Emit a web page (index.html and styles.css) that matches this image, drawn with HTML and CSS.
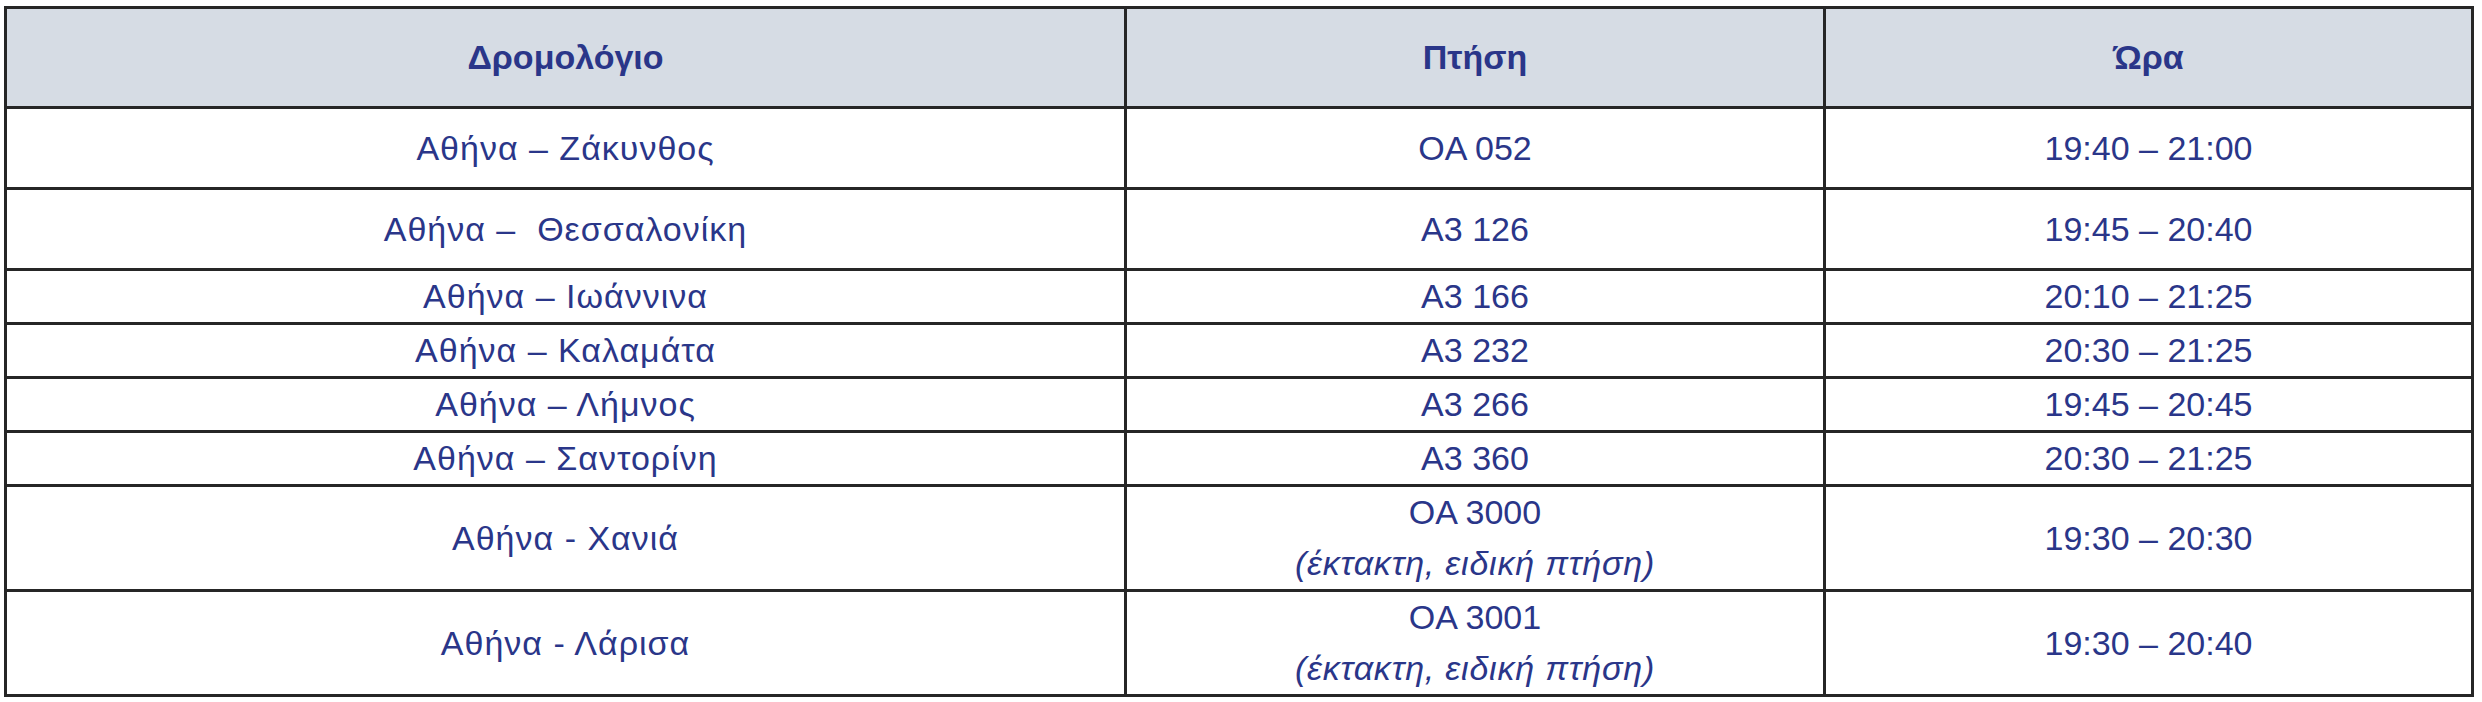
FILE: index.html
```html
<!DOCTYPE html>
<html lang="el">
<head>
<meta charset="utf-8">
<title>Πτήσεις</title>
<link rel="stylesheet" href="styles.css">
</head>
<body>
<table class="flights">
  <colgroup>
    <col class="c-route">
    <col class="c-flight">
    <col class="c-time">
  </colgroup>
  <thead>
    <tr class="r-head">
      <th>Δρομολόγιο</th>
      <th>Πτήση</th>
      <th>Ώρα</th>
    </tr>
  </thead>
  <tbody>
    <tr class="r-tall">
      <td class="route">Αθήνα – Ζάκυνθος</td>
      <td>OA 052</td>
      <td>19:40 – 21:00</td>
    </tr>
    <tr class="r-tall">
      <td class="route">Αθήνα –&nbsp; Θεσσαλονίκη</td>
      <td>A3 126</td>
      <td>19:45 – 20:40</td>
    </tr>
    <tr class="r-short">
      <td class="route">Αθήνα – Ιωάννινα</td>
      <td>A3 166</td>
      <td>20:10 – 21:25</td>
    </tr>
    <tr class="r-short">
      <td class="route">Αθήνα – Καλαμάτα</td>
      <td>A3 232</td>
      <td>20:30 – 21:25</td>
    </tr>
    <tr class="r-short">
      <td class="route">Αθήνα – Λήμνος</td>
      <td>A3 266</td>
      <td>19:45 – 20:45</td>
    </tr>
    <tr class="r-short">
      <td class="route">Αθήνα – Σαντορίνη</td>
      <td>A3 360</td>
      <td>20:30 – 21:25</td>
    </tr>
    <tr class="r-double">
      <td class="route">Αθήνα - Χανιά</td>
      <td>OA 3000<br><span class="note">(έκτακτη, ειδική πτήση)</span></td>
      <td>19:30 – 20:30</td>
    </tr>
    <tr class="r-double">
      <td class="route">Αθήνα - Λάρισα</td>
      <td>OA 3001<br><span class="note">(έκτακτη, ειδική πτήση)</span></td>
      <td>19:30 – 20:40</td>
    </tr>
  </tbody>
</table>
</body>
</html>
```

FILE: styles.css
```css
html, body {
  margin: 0;
  padding: 0;
  background: #ffffff;
}

body {
  padding: 6px 0 0 4px;
}

.flights {
  border-collapse: collapse;
  table-layout: fixed;
  width: 2467px;
  font-family: "Liberation Sans", Arial, sans-serif;
  font-size: 34px;
  line-height: 51px;
  color: #2a3689;
}

.c-route { width: 1120px; }
.c-flight { width: 699px; }
.c-time { width: 648px; }

.flights th,
.flights td {
  border: 3px solid #262626;
  text-align: center;
  vertical-align: middle;
  padding: 0;
  font-weight: normal;
}

.flights th {
  background: #d6dce4;
  font-weight: bold;
}

.flights td.route {
  letter-spacing: 1px;
}

.r-head { height: 100px; }
.r-tall { height: 81px; }
.r-short { height: 53px; }
.r-double { height: 104px; }

.note {
  font-style: italic;
  letter-spacing: 0.8px;
}
```
